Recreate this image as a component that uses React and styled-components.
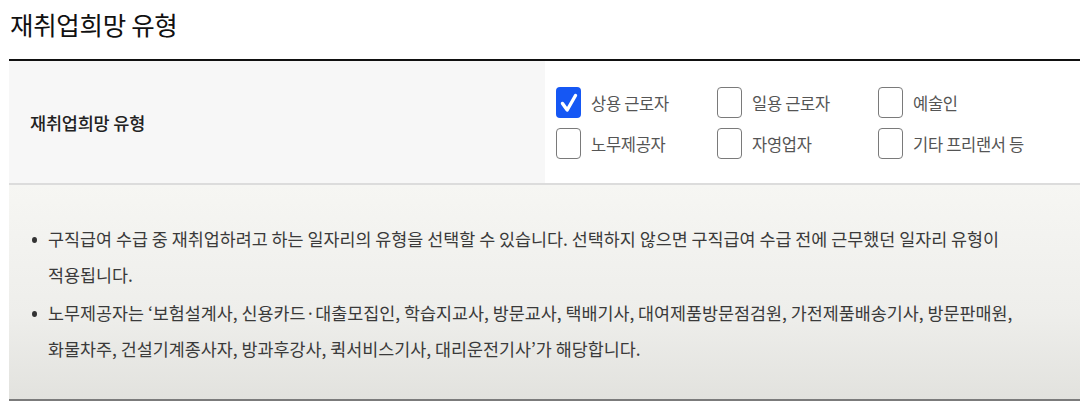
import React from "react";
import styled, { createGlobalStyle } from "styled-components";

const GlobalStyle = createGlobalStyle`
  body {
    margin: 0;
    background: #ffffff;
    font-family: "Noto Sans CJK KR", "Noto Sans", sans-serif;
  }
`;

const Page = styled.div`
  width: 1088px;
  height: 408px;
  padding-left: 9px;
  box-sizing: border-box;
  overflow: hidden;
`;

const Title = styled.h2`
  margin: 0;
  height: 59px;
  padding-left: 1px;
  display: flex;
  align-items: center;
  padding-bottom: 12px;
  box-sizing: border-box;
  font-size: 25.5px;
  font-weight: 400;
  color: #111;
  letter-spacing: -0.3px;
`;

const Table = styled.div`
  width: 1071px;
  border-top: 2px solid #111;
`;

const Row = styled.div`
  display: grid;
  grid-template-columns: 536px 1fr;
  height: 122px;
  border-bottom: 2px solid #dcdcdc;
`;

const Label = styled.div`
  background: #f7f7f7;
  display: flex;
  align-items: center;
  padding-left: 21px;
  font-size: 17.5px;
  font-weight: 500;
  color: #222;
  letter-spacing: -0.2px;
`;

const Options = styled.div`
  display: grid;
  grid-template-columns: repeat(3, 161px);
  row-gap: 10px;
  align-content: center;
  padding: 2px 0 0 11px;
  background: #fff;
`;

const Option = styled.label`
  display: flex;
  align-items: center;
  gap: 10px;
  font-size: 16.5px;
  color: #555;
  letter-spacing: -0.3px;
  white-space: nowrap;
`;

const Box = styled.span`
  width: 25px;
  height: 31px;
  box-sizing: border-box;
  border-radius: 4px;
  border: ${(p) => (p.checked ? "none" : "1.5px solid #7a7a7a")};
  background: ${(p) => (p.checked ? "#1557f4" : "#fff")};
  display: flex;
  align-items: center;
  justify-content: center;
  flex-shrink: 0;
`;

const Info = styled.div`
  height: 216px;
  box-sizing: border-box;
  padding: 36px 0 0 21px;
  background: linear-gradient(to bottom, #f6f6f3 0%, #eeeeeb 60%, #e2e2de 100%);
  border-bottom: 2px solid #7b7b7b;
`;

const Notes = styled.ul`
  margin: 0;
  padding: 0;
  list-style: none;
  width: 1045px;
`;

const Note = styled.li`
  position: relative;
  padding-left: 18px;
  font-size: 17.4px;
  line-height: 36px;
  color: #3a3a3a;
  white-space: nowrap;

  & + & {
    margin-top: 2px;
  }

  &::before {
    content: "";
    position: absolute;
    left: 2px;
    top: 16px;
    width: 5px;
    height: 6px;
    border-radius: 50%;
    background: #333;
  }
`;

const Check = () => (
  <svg width="18" height="22" viewBox="0 0 18 22">
    <path
      d="M2.5 11.5 L7.2 18 L15.5 3.5"
      fill="none"
      stroke="#fff"
      strokeWidth="3.4"
      strokeLinecap="round"
      strokeLinejoin="round"
    />
  </svg>
);

const options = [
  { label: "상용 근로자", checked: true },
  { label: "일용 근로자" },
  { label: "예술인" },
  { label: "노무제공자" },
  { label: "자영업자" },
  { label: "기타 프리랜서 등" },
];

export default function App() {
  return (
    <Page>
      <GlobalStyle />
      <Title>재취업희망 유형</Title>
      <Table>
        <Row>
          <Label>재취업희망 유형</Label>
          <Options>
            {options.map((o) => (
              <Option key={o.label}>
                <Box checked={o.checked}>{o.checked && <Check />}</Box>
                {o.label}
              </Option>
            ))}
          </Options>
        </Row>
        <Info>
          <Notes>
            <Note>
              구직급여 수급 중 재취업하려고 하는 일자리의 유형을 선택할 수 있습니다. 선택하지 않으면 구직급여 수급 전에 근무했던 일자리 유형이
              <br />
              적용됩니다.
            </Note>
            <Note>
              노무제공자는 ‘보험설계사, 신용카드·대출모집인, 학습지교사, 방문교사, 택배기사, 대여제품방문점검원, 가전제품배송기사, 방문판매원,
              <br />
              화물차주, 건설기계종사자, 방과후강사, 퀵서비스기사, 대리운전기사’가 해당합니다.
            </Note>
          </Notes>
        </Info>
      </Table>
    </Page>
  );
}
